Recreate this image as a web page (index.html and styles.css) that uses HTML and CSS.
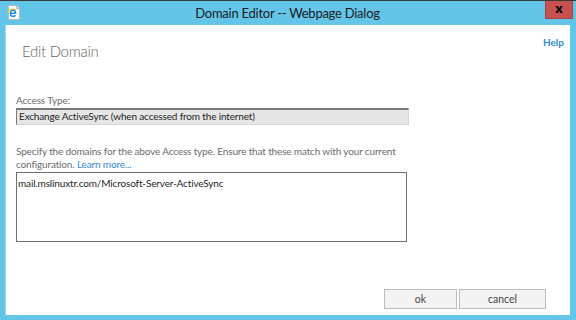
FILE: index.html
```html
<!DOCTYPE html>
<html lang="en">
<head>
    <meta charset="UTF-8">
    <title>Domain Editor -- Webpage Dialog</title>
    <link rel="stylesheet" href="styles.css">
</head>
<body>
<div class="window">
    <div class="titlebar">
        <svg class="app-icon" width="14" height="15" viewBox="0 0 14 15">
            <path d="M1.5 0.5 H9.5 L12.5 3.5 V14.5 H1.5 Z" fill="#ffffff" stroke="#b9b9b9"/>
            <path d="M9.5 0.5 V3.5 H12.5" fill="#e8e8e8" stroke="#b9b9b9"/>
            <path d="M1 8.5 C0 5 6 3 9 5" fill="none" stroke="#f2c12e" stroke-width="1.3"/>
            <path d="M3.6 8.2 H8.6 C8.6 6.2 7.4 5.2 6 5.2 C4.3 5.2 3.3 6.6 3.3 8.3 C3.3 10.1 4.5 11.4 6.2 11.4 C7.3 11.4 8.1 10.9 8.5 10.2" fill="none" stroke="#1e8fd8" stroke-width="1.5"/>
        </svg>
        <div class="title">Domain Editor -- Webpage Dialog</div>
        <div class="close">x</div>
    </div>
    <div class="panel">
        <div class="panel-head">
            <h1>Edit Domain</h1>
            <a class="help" href="#">Help</a>
        </div>
        <div class="form">
            <div class="label">Access Type:</div>
            <div class="select">Exchange ActiveSync (when accessed from the internet)</div>
            <p class="hint">Specify the domains for the above Access type. Ensure that these match with your current<br>
                configuration. <a href="#">Learn more...</a></p>
            <textarea class="domains">mail.mslinuxtr.com/Microsoft-Server-ActiveSync</textarea>
        </div>
        <div class="buttons">
            <button class="ok">ok</button>
            <button class="cancel">cancel</button>
        </div>
    </div>
</div>
</body>
</html>
```

FILE: styles.css
```css
:root {
    --frame: #63c6e8;
    --text-gray: #6b6b6b;
    --link: #2f87d6;
}

* {
    box-sizing: border-box;
    margin: 0;
    padding: 0;
}

body {
    width: 576px;
    height: 320px;
    background: var(--frame);
    font-family: Lato, 'Noto Sans', sans-serif;
    overflow: hidden;
}

.window {
    height: 320px;
    border-top: 1px solid #3a3a3a;
    display: flex;
    flex-direction: column;
    padding: 0 6px 5px 5px;
}

.titlebar {
    height: 24px;
    display: grid;
    grid-template-columns: 1fr auto 1fr;
    align-items: start;
}

.app-icon {
    margin: 4px 0 0 2px;
}

.title {
    margin-top: 4px;
    font-size: 13px;
    letter-spacing: -0.25px;
    color: #1a1a1a;
}

.close {
    justify-self: end;
    width: 28px;
    height: 18px;
    margin-right: -3px;
    background: #c75050;
    border: 1px solid #a84242;
    border-top: none;
    color: #000;
    font-family: 'Noto Sans', sans-serif;
    font-weight: bold;
    font-size: 13px;
    line-height: 14px;
    text-align: center;
}

.panel {
    flex: 1;
    background: #ffffff;
    border-left: 1px solid #9fd8ec;
    display: flex;
    flex-direction: column;
}

.panel-head {
    display: flex;
    justify-content: space-between;
    align-items: flex-start;
    padding: 10px 6px 0 16px;
}

.panel-head h1 {
    margin-top: 7px;
    font-size: 15px;
    letter-spacing: -0.3px;
    font-weight: 300;
    color: #666;
}

.help {
    margin-top: 1px;
    font-size: 10px;
    font-weight: bold;
    color: var(--link);
    text-decoration: none;
}

.form {
    padding: 33px 0 0 10px;
    width: 403px;
    font-size: 10px;
    letter-spacing: -0.15px;
}

.label {
    color: var(--text-gray);
    line-height: 14px;
}

.select {
    margin-top: 1px;
    height: 17px;
    background: #e6e6e6;
    border-top: 2px solid #7a7a7a;
    border-left: 1px solid #7a7a7a;
    border-right: 1px solid #d6d6d6;
    border-bottom: 1px solid #d6d6d6;
    line-height: 13px;
    padding-left: 2px;
    color: #1e1e1e;
}

.hint {
    margin-top: 20px;
    line-height: 12.5px;
    color: var(--text-gray);
}

.hint a {
    color: var(--link);
    text-decoration: none;
}

.domains {
    display: block;
    margin-top: 2px;
    width: 391px;
    height: 70px;
    border: 1px solid #6e6e6e;
    font-family: inherit;
    font-size: 10px;
    letter-spacing: -0.15px;
    line-height: 13px;
    padding: 4px 1px;
    color: #1e1e1e;
    resize: none;
}

.buttons {
    margin-top: auto;
    display: flex;
    justify-content: flex-end;
    gap: 2px;
    padding: 0 24px 6px 0;
}

.buttons button {
    height: 20px;
    background: #f3f3f3;
    border: 1px solid #bdbdbd;
    font-family: inherit;
    font-size: 10.5px;
    color: #444;
}

.ok {
    width: 73px;
}

.cancel {
    width: 87px;
}
```
